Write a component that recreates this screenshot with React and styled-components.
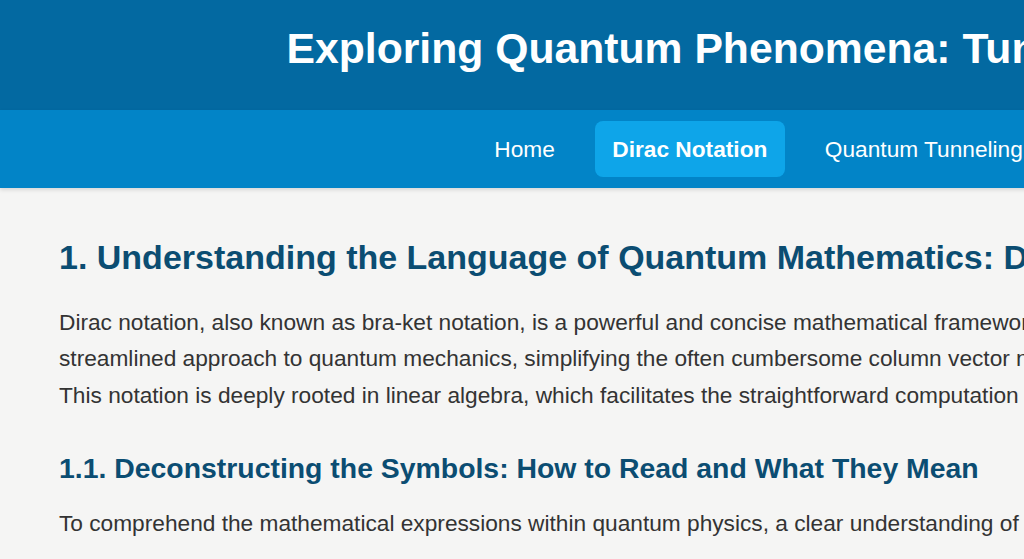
import React from 'react';
import styled, { createGlobalStyle } from 'styled-components';

const GlobalStyle = createGlobalStyle`
  html, body {
    margin: 0;
    padding: 0;
    overflow: hidden;
    background: #f5f5f4;
  }

  body {
    font-family: "Liberation Sans", Arial, sans-serif;
    color: #333;
  }
`;

const Page = styled.div`
  width: 1841px;
  min-height: 100vh;
  background: #f5f5f4;
`;

const Header = styled.header`
  background: #0369a1;
  padding: 22.5px 0 36px;
  text-align: center;
`;

const Title = styled.h1`
  margin: 0;
  font-size: 42.7px;
  line-height: 1.2;
  font-weight: 700;
  color: #fff;
`;

const Nav = styled.nav`
  background: #0284c7;
  padding: 11.5px 0 10.5px 3px;
  display: flex;
  justify-content: center;
  gap: 22.5px;
  box-shadow: 0 2px 4px rgba(0, 0, 0, 0.12);
  position: relative;
`;

const NavLink = styled.a`
  padding: 14.5px 17.5px;
  font-size: 22.7px;
  line-height: 1.2;
  color: #fff;
  text-decoration: none;
  border-radius: 8px;
  font-weight: ${props => (props.$active ? 700 : 400)};
  background: ${props => (props.$active ? '#0ea5e9' : 'transparent')};
`;

const Main = styled.main`
  padding: 48.8px 59px 0;
`;

const Content = styled.article`
  width: 1271px;
`;

const SectionTitle = styled.h2`
  margin: 0 0 26px;
  font-size: 34px;
  line-height: 1.2;
  font-weight: 700;
  color: #0b4d72;
`;

const SubTitle = styled.h3`
  margin: 37.5px 0 20px;
  font-size: 28.4px;
  line-height: 1.2;
  font-weight: 700;
  color: #0b4d72;
`;

const Paragraph = styled.p`
  margin: 0;
  font-size: 22.7px;
  line-height: 36.7px;
  color: #333;
`;

const links = ['Home', 'Dirac Notation', 'Quantum Tunneling', 'Applications', 'Glossary'];

export default function App() {
  return (
    <Page>
      <GlobalStyle />
      <Header>
        <Title>Exploring Quantum Phenomena: Tunneling and Dirac Notation</Title>
      </Header>
      <Nav>
        {links.map(link => (
          <NavLink key={link} href="#" $active={link === 'Dirac Notation'}>
            {link}
          </NavLink>
        ))}
      </Nav>
      <Main>
        <Content>
          <SectionTitle>1. Understanding the Language of Quantum Mathematics: Dirac Notation</SectionTitle>
          <Paragraph>
            Dirac notation, also known as bra-ket notation, is a powerful and concise mathematical
            framework that offers a highly streamlined approach to quantum mechanics, simplifying the
            often cumbersome column vector notation and matrix algebra. This notation is deeply rooted
            in linear algebra, which facilitates the straightforward computation of probabilities.
          </Paragraph>
          <SubTitle>1.1. Deconstructing the Symbols: How to Read and What They Mean</SubTitle>
          <Paragraph>
            To comprehend the mathematical expressions within quantum physics, a clear understanding of
            its core symbols is essential.
          </Paragraph>
        </Content>
      </Main>
    </Page>
  );
}
